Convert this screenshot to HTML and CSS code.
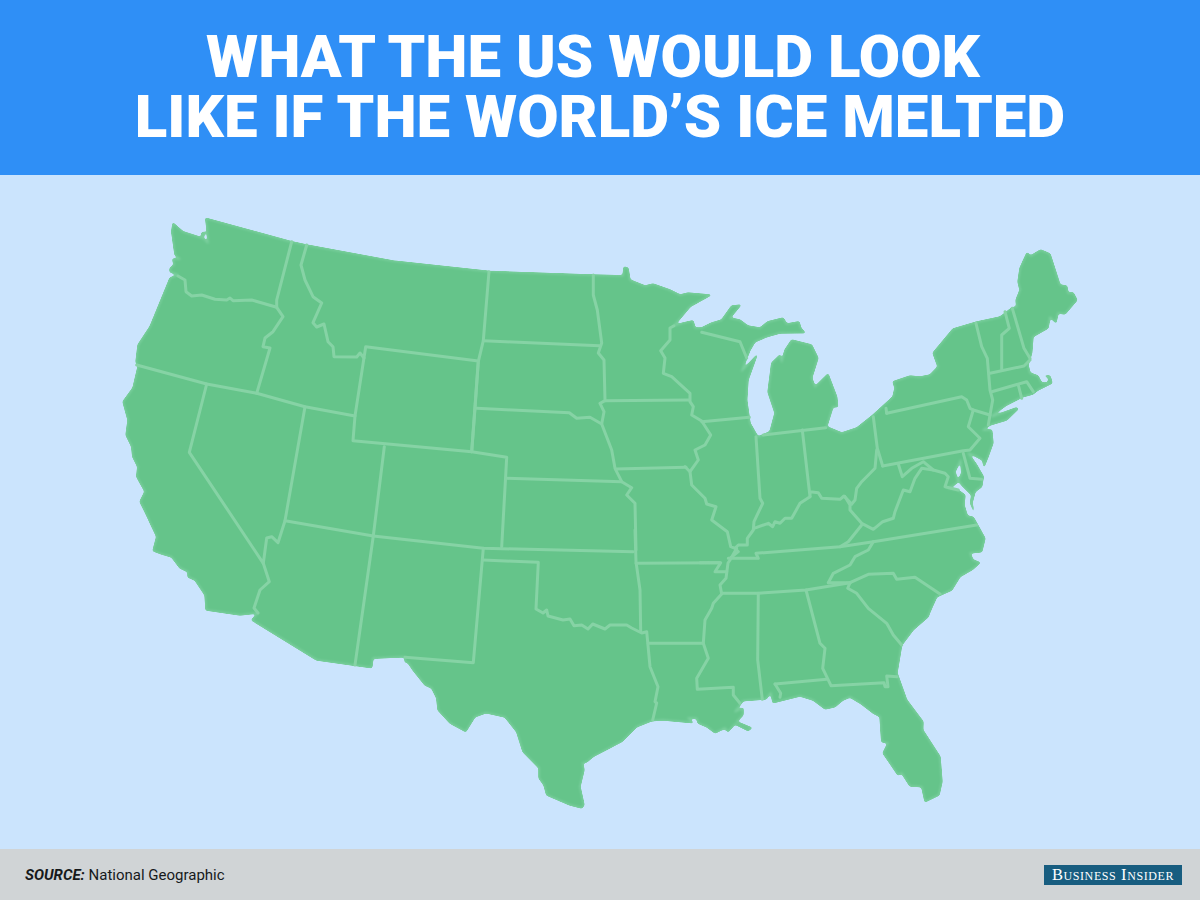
FILE: index.html
```html
<!DOCTYPE html>
<html lang="en">
<head>
<meta charset="utf-8">
<title>What the US would look like if the world's ice melted</title>
<link rel="stylesheet" href="styles.css">
</head>
<body>
<div class="page">
  <header class="banner">
    <h1 class="title"><span class="title-first">WHAT THE US WOULD LOOK</span><span class="title-second">LIKE IF THE WORLD’S ICE MELTED</span></h1>
  </header>
  <main class="map-area">
    <svg class="map" viewBox="0 175 1200 675" width="1200" height="675" aria-label="Map of the contiguous United States">
      <defs>
        <filter id="soften" x="-5%" y="-5%" width="110%" height="110%" color-interpolation-filters="sRGB">
          <feGaussianBlur stdDeviation="1"/>
          <feComponentTransfer>
            <feFuncA type="linear" slope="5" intercept="-2"/>
          </feComponentTransfer>
        </filter>
      </defs>
      <path class="land" d="M205.7 218.3 L291.7 241.7 L306.7 245 L393.3 261 L488.3 271.3 L593 275 L623 275.7 L624 267 L628 268 L630 280 L645 286 L653 284 L670 290 L680 295 L688 293 L710.7 295 L690 306.7 L674 325.7 L683 323 L693 320.7 L695 328 L701.7 328 L711.7 323 L721.7 320 L731.7 306 L740.7 305 L730 318 L740 320 L748 326 L760 328 L768 321.7 L783 318 L786.7 324 L799 321.7 L800.7 328 L805 332.7 L780 333 L766.7 336.7 L755 341.7 L750 350 L741.7 371 L757 355 L748 380 L746.7 400 L750 423 L758 437 L770 431.7 L775 413 L768 392 L771.7 363 L780 355 L781.7 361.7 L785 350 L791.7 340 L811.7 345 L818 358 L811.7 378 L815 386.7 L828 374 L836.7 396.7 L837.7 406.7 L833 406.7 L826.7 426.7 L841.7 433 L856.7 428 L873 415 L893 396.7 L895 388 L893 381.7 L910 376 L920 377 L930 375 L938 366.7 L933 353 L953 329 L976.7 322 L1000 317 L1011.7 308 L1016.7 306.7 L1016 300 L1020 290 L1018 281.7 L1020 268 L1027 252.7 L1030.7 256 L1040.7 250 L1050 254 L1060 285 L1066.7 286 L1068 293 L1073 292.7 L1077 300 L1065 314 L1058 313 L1056 322.7 L1050 317 L1048 328 L1033 336.7 L1031.7 353 L1028 365 L1030 373 L1038 376 L1041.7 383 L1048 383 L1049 378 L1045 375.7 L1050 376 L1052 383 L1038 390 L1033 394 L1023 396.7 L1006.7 405 L993 415 L991.7 416.7 L1016.7 407.7 L1018 409 L1006.7 420 L990 425 L983 430 L991.7 430 L993 443 L988 456.7 L984 466.7 L982.7 460 L973.3 455 L968.3 453.3 L976.7 465 L983.3 476.7 L981.7 486.7 L975 491.7 L972 503 L973.7 511 L970.5 503 L971.7 495 L961.7 485 L958.3 480 L961.7 473.3 L960.7 460 L955 471.7 L958 481.7 L953 486 L948 488 L958 490 L965 495 L964 505 L967.3 516 L973.3 517.3 L985 538.3 L981.7 551.7 L970 553 L973 560 L980 562.7 L973 569 L960 576.7 L951.7 590 L936.7 596.7 L930 611.7 L928 617 L913 630 L901.7 645 L897 673 L906.7 700 L923 721.7 L922.7 730 L940 756.7 L942 781.7 L939 795 L925 801.7 L921.7 786.7 L910 786 L901.7 773 L898 775 L883 753 L888 743 L881.7 741.7 L880 716.7 L873 713 L860 703 L850 697 L843 700 L835 706.7 L825 709 L813 700 L800 696 L773 702.7 L770.7 692.7 L766 699 L743 700.7 L735 711.7 L743 708 L743 715 L736.7 721.7 L751.7 728 L748 730.7 L735 724 L728 731.7 L725 728 L715 733 L706.7 726.7 L698 723 L696.7 718.3 L688 718 L693 722.7 L663 720 L651.7 720.7 L636.7 726.7 L621.7 741.7 L593 756.7 L586.7 762 L582.7 763 L584 770 L580 786.7 L584 805 L581.7 808 L570 805 L546.7 795 L544 785 L539 778 L539 768 L523 751.7 L516.7 731.7 L505 717 L486 712.7 L475 716.7 L465.7 731.7 L450 723 L438 710 L436.7 698 L431.7 688 L425 685 L413 670 L408 662.7 L405 661.7 L405 656.7 L373 658.3 L371.7 667.7 L316.7 660 L251.7 620 L258 613 L240 615 L206 610 L205 595 L195 580 L188 577 L188 571.7 L180 568 L171.7 557 L161.7 554 L153 550.7 L156.7 536.7 L145 511.7 L140 501.7 L145 491.7 L136.7 476.7 L137.7 466.7 L132.7 456.7 L131.7 446.7 L126 435 L128 420 L123 401.7 L133 388 L138 366.7 L136 361.7 L138 345 L150 326.7 L170 278 L178 275 L170 271.7 L170 268.3 L174 265 L172.7 259 L180 259 L175 255 L171.7 231.7 L173 223 L183 231.7 L201.7 237.7 L201.7 233 L205 232 L203 238 L208 243 L207 230 Z"/>
      <g class="borders">
        <!-- Northwest -->
        <polyline points="178,276 185,280 186,291.7 191.7,296 201.7,295 215,299.3 226.7,300 230,298 233,300.7 251.7,300 276.7,307.3"/>
        <polyline points="291.7,241.7 276.7,300 276.7,307.3 283,316.7 273,331.7 265,338 263,346.7 270,348 256.7,393.3"/>
        <polyline points="306.7,245 301,265 305,280 313,296.7 321.7,303 313,322.7 316.7,327 324,324 328,341.7 333,346.7 334,356.7 356.7,357 360,353 364,358"/>
        <polyline points="136.7,365 206.7,384 256.7,393.3 305,406.7 355,416"/>
        <polygon points="365.7,346.7 478.3,361 471.7,451.7 353,440.7 355,416"/>
        <polyline points="206.7,384 189.3,452.3 263.3,563.3 266.7,538 271.7,536.7 278,542.7 285,520.7 305,406.7"/>
        <polyline points="263.3,563.3 269.3,581.7 260,590 254,608 258,613"/>
        <!-- Southwest -->
        <polyline points="285,520.7 373.3,536 483.3,548.3 633.3,551.7"/>
        <polyline points="384.3,446.7 373.3,536 355,665"/>
        <polyline points="471.7,451.7 506.7,457.3 501.7,546.7"/>
        <polyline points="483.3,548.3 473.3,662.7 405,657.3"/>
        <polyline points="483.3,560 538.3,562.3 536,609 543,613 546.7,610 548,616 563,620 570,619 574,625.7 581.7,625 588,629 592.7,624 605,629 610,625 626.7,625 631.7,628 641.7,633 646.7,631.7 650,666.7 658,686.7 655,701.7 656.7,703 652.7,720"/>
        <polyline points="635,530 636,561.7 640,590 640.7,631.7"/>
        <polyline points="636,563.3 720,562.7"/>
        <polyline points="648.3,643.3 703.3,643.3"/>
        <!-- Plains -->
        <polyline points="489,271.7 483.3,340.7 478.3,361.7 475,408.3 471.7,451.7"/>
        <polyline points="483.3,340.7 599.3,345.7"/>
        <polyline points="476.7,408.3 569.3,412.7 576.7,418.3 590,417.3 601.7,424"/>
        <polyline points="593.3,275 593.3,295 597.3,310 601.7,343 598.3,353 604,360 605,400.7 600,403.3 604,411.7 601.7,424 611.7,450 615,468.3 621.7,481.7 631.7,487.7 626.7,495 635,503.3 636,550"/>
        <polyline points="506.7,478.3 621.7,481.7"/>
        <polyline points="605,400.7 689.3,400"/>
        <polyline points="615.7,469 686,467.3"/>
        <!-- Midwest -->
        <polyline points="674,325.7 670,328 670,340 660.7,350.7 665,358 663.3,373.3 671.7,376.7 690,393.3 690,401.7 693.3,406.7 691.7,415 701.7,421 710.7,435 705,445 695,450 698.3,460 690,471.7 691.7,485 705,498.3 706.7,504 716,506.7 711.7,520 727.3,531.7 730.7,546.7 735,548.3"/>
        <polyline points="685,466.7 690,471.7"/>
        <polyline points="701.7,421.7 749.3,417.3"/>
        <polyline points="701.7,332.3 740,341.7 746.7,358"/>
        <polyline points="756,436.7 760,498.3 762.7,503.3 754,521.7 753.3,530 747.3,538.3 747.3,545 738.3,545 735,548.3 738.3,551.7 730,558.3"/>
        <polyline points="754,528.3 768.3,523.3 772.7,526.7 775,521.7 780,523.3 785,518.3 791.7,518.3 800,503.3 810,496.7"/>
        <polyline points="763.3,435 825.7,427.7"/>
        <polyline points="802.3,430 810,496.7 810,491.7 818.3,492.7 821.7,498.3 840,499.3 844,496 851.7,504"/>
        <polyline points="873.3,416.7 877.3,448.3 882.7,466"/>
        <!-- Appalachia -->
        <polyline points="851.7,504 855,500 856.7,488.3 861.7,481.7 875,468.3 876.7,450"/>
        <polyline points="845,496.7 850,505 850,510 861.7,523.3 873.3,529.3 882.7,521.7 893.3,518.3 895,511.7 903.3,490 910,491.7 915,478.3 921.7,468.3 933.3,470"/>
        <polyline points="898.3,464 902.3,476.7 911.7,468.3 923.3,461.7 933.3,470 945,473.3 948.3,476.7 945,486.7 958.3,490"/>
        <polyline points="976.7,525 873.3,541.7 840,546.7 756,553.3 758.3,558.3 728.3,558.3"/>
        <polyline points="861.7,525 848.3,541.7 840,546.7"/>
        <polyline points="873.3,541.7 868.3,550 855,556.7 850,565 833.3,573.3 828.3,582.7"/>
        <!-- Northeast -->
        <polyline points="886.7,413.3 886,408.3"/>
        <polyline points="882.7,466 963.3,450.7 970,450 980,438.3 968.3,426.7 973.3,410 970,408.3 966.7,400 961.7,396.7 886.7,413.3"/>
        <polyline points="973.3,410 990,415"/>
        <polyline points="976,323.3 981.7,346.7 987.3,358.3 990,390 992.7,400 990,415 988.3,425"/>
        <polyline points="1005,311.7 1009.3,328.3 1001.7,335 1001.7,369.3"/>
        <polyline points="1012.3,308.3 1024,348.3 1030,358.3"/>
        <polyline points="990,373.3 1024,366 1030,360"/>
        <polyline points="991.7,391.7 1026.7,381.7 1033.3,391.7"/>
        <polyline points="1018.3,385 1021.7,398.3"/>
        <polyline points="963.3,453.3 970,478.3 981.7,479.3"/>
        <!-- South -->
        <polyline points="700,562.7 720.7,562.7 715,571.7 726.7,571.7"/>
        <polyline points="736.7,548.3 730,560 728,563 726,578.3 720,585 721.7,594 713.3,603.3 711.7,608.3 705,620 703.3,643.3 708.3,658.3 696.7,678.3 697.3,689.3 733.3,687.3 733.3,695 740,703.3"/>
        <polyline points="721.7,593.3 758.3,593.3 806,590 850,582.7 868.3,574.3 893.3,573.3 896.7,579.3 915,577.3 940,594"/>
        <polyline points="828.3,582.7 850,582.7"/>
        <polyline points="850,582.7 847.7,588.3 856.7,593.3 868.3,608.3 886.7,623.3 893.3,635 901.7,645"/>
        <polyline points="758.3,593.3 757.7,660 762.3,699.3"/>
        <polyline points="806,590 820,643.3 825,648.3 822.7,668.3 831,685.7 884,682.7 885,686.7 888,686.7 886.7,676 897,676.7"/>
        <polyline points="775,684 826.7,679.3"/>
        <polyline points="775,684 780.7,693.3 780,697.3"/>
      </g>
    </svg>
  </main>
  <footer class="footer">
    <p class="source"><b class="source-label">SOURCE:</b> National Geographic</p>
    <div class="logo">Business Insider</div>
  </footer>
</div>
</body>
</html>
```

FILE: styles.css
```css
html, body {
  margin: 0;
  padding: 0;
}

.page {
  width: 1200px;
  height: 900px;
  display: flex;
  flex-direction: column;
  overflow: hidden;
  background: #cbe4fd;
}

.banner {
  height: 175px;
  flex: none;
  background: #2f8ff6;
  display: flex;
  justify-content: center;
  padding-top: 27px;
  box-sizing: border-box;
}

.title {
  margin: 0;
  color: #fff;
  font-family: Roboto, "Liberation Sans", sans-serif;
  font-weight: 900;
  font-size: 60px;
  line-height: 60px;
  text-align: center;
  white-space: nowrap;
}

.title-first,
.title-second {
  display: block;
}

.title-first {
  padding-right: 14px;
}

.map-area {
  flex: 1;
  min-height: 0;
  display: flex;
  overflow: hidden;
}

.map {
  display: block;
  flex: none;
}

.land {
  fill: #65c48a;
  stroke: #7dd0a0;
  stroke-width: 1.5;
  stroke-linejoin: round;
  filter: url(#soften);
}

.borders {
  filter: blur(0.3px);
}

.borders polyline,
.borders polygon {
  fill: none;
  stroke: #86d3a5;
  stroke-width: 3;
  stroke-linejoin: round;
  stroke-linecap: round;
}

.footer {
  height: 51px;
  flex: none;
  background: #d0d4d6;
  display: flex;
  align-items: center;
  justify-content: space-between;
  padding: 0 18px 0 25px;
}

.source {
  margin: 0;
  font-family: Roboto, "Liberation Sans", sans-serif;
  font-size: 15px;
  color: #16191b;
}

.source-label {
  font-weight: 700;
  font-style: italic;
}

.logo {
  width: 138px;
  height: 20px;
  background: #175d80;
  color: #ffffff;
  font-family: "Liberation Serif", serif;
  font-variant: small-caps;
  font-size: 16.5px;
  line-height: 20px;
  letter-spacing: 0.6px;
  text-align: center;
  white-space: nowrap;
}
```
